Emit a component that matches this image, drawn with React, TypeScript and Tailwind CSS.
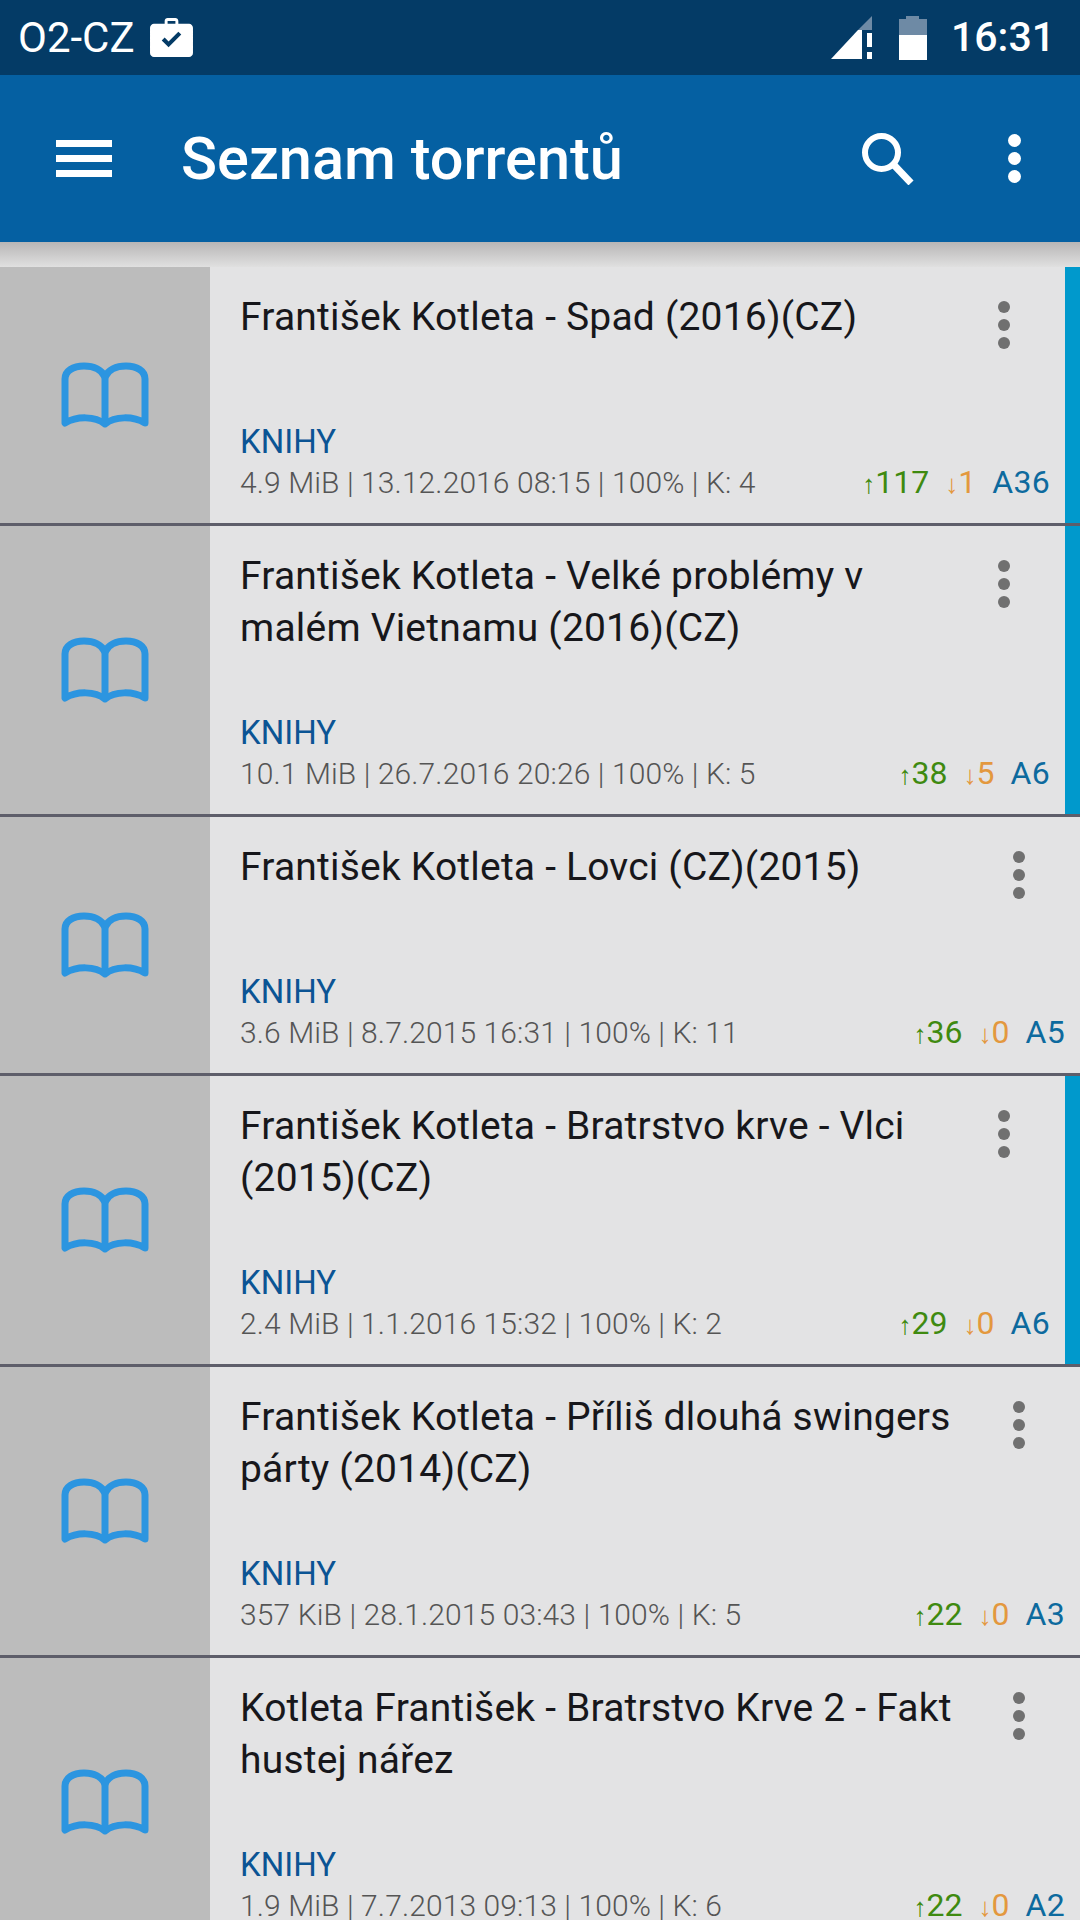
import { Fragment } from "react";

type Torrent = {
  title: string[];
  meta: string;
  up: number;
  down: number;
  active: number;
  stripe?: boolean;
};

const TORRENTS: Torrent[] = [
  { title: ["František Kotleta - Spad (2016)(CZ)"], meta: "4.9 MiB | 13.12.2016 08:15 | 100% | K: 4", up: 117, down: 1, active: 36, stripe: true },
  { title: ["František Kotleta - Velké problémy v", "malém Vietnamu (2016)(CZ)"], meta: "10.1 MiB | 26.7.2016 20:26 | 100% | K: 5", up: 38, down: 5, active: 6, stripe: true },
  { title: ["František Kotleta - Lovci (CZ)(2015)"], meta: "3.6 MiB | 8.7.2015 16:31 | 100% | K: 11", up: 36, down: 0, active: 5 },
  { title: ["František Kotleta - Bratrstvo krve - Vlci", "(2015)(CZ)"], meta: "2.4 MiB | 1.1.2016 15:32 | 100% | K: 2", up: 29, down: 0, active: 6, stripe: true },
  { title: ["František Kotleta - Příliš dlouhá swingers", "párty (2014)(CZ)"], meta: "357 KiB | 28.1.2015 03:43 | 100% | K: 5", up: 22, down: 0, active: 3 },
  { title: ["Kotleta František - Bratrstvo Krve 2 - Fakt", "hustej nářez"], meta: "1.9 MiB | 7.7.2013 09:13 | 100% | K: 6", up: 22, down: 0, active: 2 },
];

function BookIcon() {
  return (
    <svg width="88" height="66" viewBox="0 0 88 66" fill="none" stroke="#2c95e0" strokeWidth="7" strokeLinejoin="round" strokeLinecap="round">
      <path d="M4 61V17C4 9 12 4 23 4C33 4 41 8 44 15C47 8 55 4 65 4C76 4 84 9 84 17V61C72 54 54 54 44 62C34 54 16 54 4 61Z" />
      <path d="M44 15V61" />
    </svg>
  );
}

function Dots({ color, size, gap }: { color: string; size: string; gap: string }) {
  return (
    <div className={`flex flex-col ${gap}`}>
      <span className={`${size} rounded-full ${color}`} />
      <span className={`${size} rounded-full ${color}`} />
      <span className={`${size} rounded-full ${color}`} />
    </div>
  );
}

function StatusBar() {
  return (
    <div className="flex h-[75px] items-center justify-between bg-[#043b66] pl-[18px] pr-[25px] text-white">
      <div className="flex items-center gap-[15px]">
        <span className="text-[42px] leading-none">O2-CZ</span>
        <svg width="43" height="41" viewBox="0 0 44 42" fill="white">
          <path fillRule="evenodd" d="M15 7V4C15 2 16.500 1 18 1H26C27.500 1 29 2 29 4V7H40C42 7 44 9 44 11V37C44 39.500 42 41 40 41H4C2 41 0 39.500 0 37V11C0 9 2 7 4 7ZM18 7H26V4H18ZM19 31L12 24L15 21L19 25L29 15L32 18Z" />
        </svg>
      </div>
      <div className="flex items-center">
        <svg width="42" height="44" viewBox="0 0 42 44" className="mr-[25px]">
          <path d="M41 0V14H27Z" fill="#6e8aa5" />
          <path d="M0 43L27 14H31V43Z" fill="white" />
          <path d="M36 17H41V31H36ZM36 36H41V43H36Z" fill="white" />
        </svg>
        <svg width="30" height="44" viewBox="0 0 30 44" className="mr-[23px]">
          <path d="M8 0H21V3H29V19H1V3H8Z" fill="#6e8aa5" />
          <rect x="1" y="19" width="28" height="25" fill="white" />
        </svg>
        <span className="text-[41px] font-medium leading-none">16:31</span>
      </div>
    </div>
  );
}

function AppBar() {
  return (
    <div className="flex h-[167px] items-center bg-[#0560a2] text-white">
      <div className="ml-[56px] flex w-[56px] flex-col gap-[8px]">
        <span className="h-[7px] bg-white" />
        <span className="h-[7px] bg-white" />
        <span className="h-[7px] bg-white" />
      </div>
      <h1 className="ml-[69px] flex-1 pt-[2px] text-[59.5px] font-medium leading-none">Seznam torrentů</h1>
      <svg width="52" height="52" viewBox="0 0 52 52" fill="none" stroke="white" className="mr-[94px]">
        <circle cx="19.500" cy="19.500" r="16.500" strokeWidth="6" />
        <path d="M31 31L49 50" strokeWidth="7" />
      </svg>
      <div className="mr-[59px]">
        <Dots color="bg-white" size="h-[13px] w-[13px]" gap="gap-[5px]" />
      </div>
    </div>
  );
}

function TorrentRow({ t }: { t: Torrent }) {
  return (
    <div className="flex border-b-[3px] border-[#5e5e6a]">
      <div className="flex w-[210px] shrink-0 items-center justify-center bg-[#bcbcbc]">
        <BookIcon />
      </div>
      <div className="min-w-0 flex-1 pb-[20px] pl-[30px] pr-[15px] pt-[24px]">
        <div className="mb-[58px] flex min-h-[72px] justify-between">
          <div className="text-[39px] leading-[52px] tracking-[0.2px] text-[#17171b]">
            {t.title.map((line, i) => (
              <Fragment key={i}>
                {i > 0 && <br />}
                {line}
              </Fragment>
            ))}
          </div>
          <div className="mr-[40px] pt-[10px]">
            <Dots color="bg-[#707070]" size="h-[12px] w-[12px]" gap="gap-[6px]" />
          </div>
        </div>
        <div className="h-[41px] text-[33px] leading-[41px] text-[#0b5494]">KNIHY</div>
        <div className="flex h-[41px] items-center justify-between">
          <span className="text-[30px] font-light leading-[41px] tracking-[0.1px] text-[#555555]">{t.meta}</span>
          <span className="flex gap-[16px] text-[32px] leading-[41px]">
            <span className="text-[#3f8a10]"><span className="text-[26px] leading-none">↑</span>{t.up}</span>
            <span className="text-[#e3983e]"><span className="text-[26px] leading-none">↓</span>{t.down}</span>
            <span className="tracking-[0.3px] text-[#0d6a9e]">A{t.active}</span>
          </span>
        </div>
      </div>
      {t.stripe && <div className="w-[15px] shrink-0 bg-[#0099cc]" />}
    </div>
  );
}

export default function App() {
  return (
    <div className="h-[1920px] w-[1080px] overflow-hidden bg-[#e3e3e4] font-['Roboto',sans-serif]">
      <StatusBar />
      <AppBar />
      <div className="h-[25px] bg-gradient-to-b from-[#b8b6b6] to-[#e0e0e0]" />
      {TORRENTS.map((t) => (
        <TorrentRow key={t.meta} t={t} />
      ))}
    </div>
  );
}
